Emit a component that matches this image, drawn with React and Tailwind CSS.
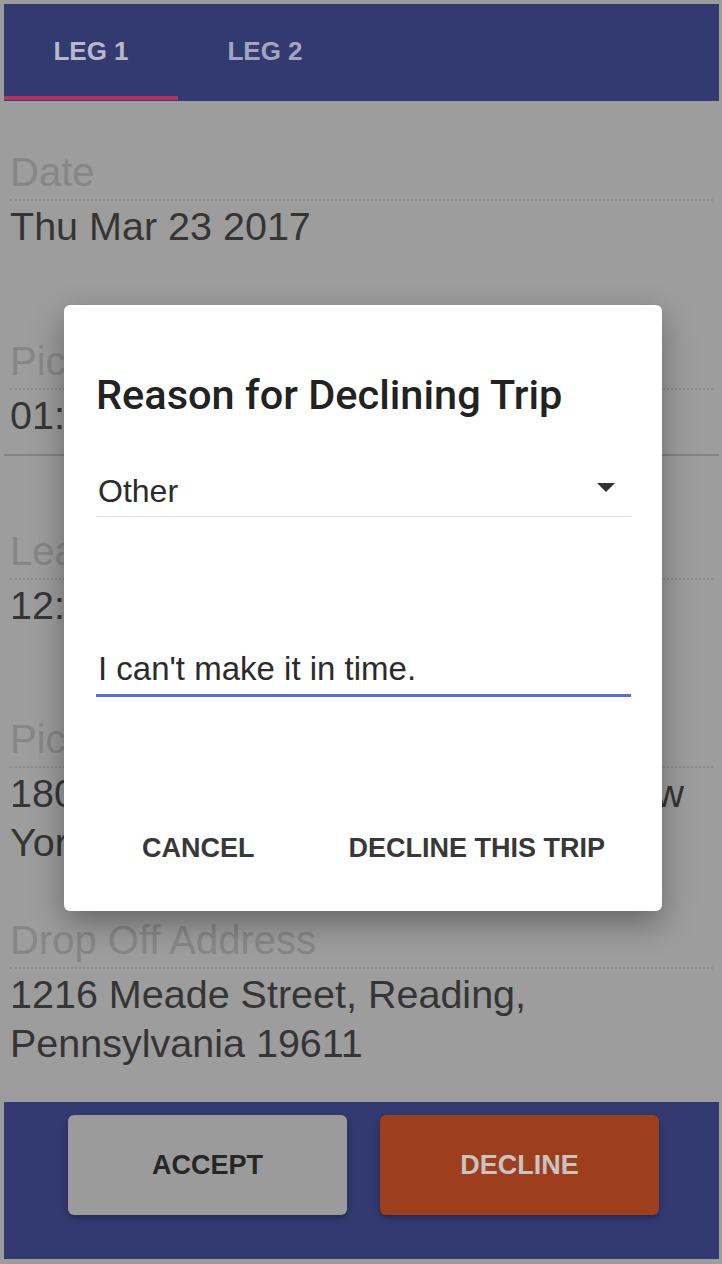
import { useState } from 'react';

const fields = [
    { label: 'Date', value: 'Thu Mar 23 2017', gap: 'mt-0' },
    { label: 'Pickup Time', value: '01:30 PM', gap: 'mt-[88px]' },
];

const fields2 = [
    { label: 'Leave By', value: '12:45 PM', gap: 'mt-[73px]' },
    { label: 'Pickup Address', value: '180 Elm Street, Financial District, New York, New York 10038', gap: 'mt-[87px]' },
    { label: 'Drop Off Address', value: '1216 Meade Street, Reading, Pennsylvania 19611', gap: 'mt-[51px]' },
];

function Field({ label, value, gap }) {
    return (
        <div className={gap}>
            <div className="text-[40px] leading-[44px] pb-[5px] text-[#878787] border-b-2 border-dotted border-[#8c8c8c]">
                {label}
            </div>
            <div className="text-[39.5px] leading-[49px] pt-[1px] text-[#353535]">{value}</div>
        </div>
    );
}

function App() {
    const [tab, setTab] = useState(0);
    const [reason, setReason] = useState("I can't make it in time.");

    return (
        <div
            className="relative w-[722px] h-[1264px] bg-[#9d9d9d] pt-[4px] pl-[4px] pr-[3px] pb-[5px] overflow-hidden"
            style={{ fontFamily: '"Liberation Sans", Arial, sans-serif' }}
        >
            <div className="h-full flex flex-col">
                <div className="h-[97px] bg-[#323a71] flex">
                    {['LEG 1', 'LEG 2'].map((t, i) => (
                        <button key={t} onClick={() => setTab(i)} className="w-[174px] h-full flex flex-col">
                            <div
                                className={`flex-1 flex items-center justify-center pt-[3px] text-[26px] font-bold ${
                                    i === tab ? 'text-[#b6b9c7]' : 'text-[#a2a6bc]'
                                }`}
                            >
                                {t}
                            </div>
                            <div className={`h-[4px] w-full ${i === tab ? 'bg-[#ad3660]' : ''}`} />
                            <div className="h-[1px]" />
                        </button>
                    ))}
                </div>

                <div className="flex-1 px-[6px] pt-[49px]">
                    {fields.map((f) => (
                        <Field key={f.label} {...f} />
                    ))}
                    <div className="mt-[14px] -mx-[6px] h-[2px] bg-[#848484]" />
                    {fields2.map((f) => (
                        <Field key={f.label} {...f} />
                    ))}
                </div>

                <div className="h-[157px] bg-[#323a71] flex justify-center gap-[33px] pt-[13px] pl-[4px]">
                    <button className="w-[279px] h-[100px] rounded-[6px] bg-[#9b9b9b] text-[27px] font-bold text-[#262626] shadow-[0_3px_6px_rgba(0,0,0,0.3)]">
                        ACCEPT
                    </button>
                    <button className="w-[279px] h-[100px] rounded-[6px] bg-[#9d3e1d] text-[27px] font-bold text-[#c9c4c1] shadow-[0_3px_6px_rgba(0,0,0,0.3)]">
                        DECLINE
                    </button>
                </div>
            </div>

            {/* dialog */}
            <div className="absolute left-[64px] top-[305px] w-[598px] h-[606px] bg-white rounded-[6px] shadow-[0_12px_32px_rgba(0,0,0,0.35)] pl-[32px] pr-[31px] pt-[66px] flex flex-col">
                <h2
                    className="text-[41.5px] leading-[48px] font-medium text-[#222]"
                    style={{ fontFamily: 'Roboto, "Liberation Sans", sans-serif' }}
                >
                    Reason for Declining Trip
                </h2>

                <div className="mt-[44px] h-[54px] flex items-center justify-between border-b border-[#e0e0e0] pl-[2px] pr-[16px]">
                    <span className="text-[32px] pt-[3px] text-[#2b2b2b]">Other</span>
                    <svg width="18" height="10" viewBox="0 0 18 10" className="-mt-[4px]">
                        <polygon points="0,0 18,0 9,9" fill="#333" />
                    </svg>
                </div>

                <input
                    value={reason}
                    onChange={(e) => setReason(e.target.value)}
                    className="mt-[123px] h-[57px] pl-[2px] pt-[4px] text-[33px] text-[#2b2b2b] outline-none border-b-[3px] border-[#5b6dd0] bg-transparent"
                />

                <div className="mt-[115px] flex justify-end gap-[38px] -mr-[2px]">
                    <button className="h-[72px] px-[28px] text-[27px] font-bold text-[#383838]">CANCEL</button>
                    <button className="h-[72px] px-[28px] text-[27px] font-bold text-[#383838]">DECLINE THIS TRIP</button>
                </div>
            </div>
        </div>
    );
}

export default App;
